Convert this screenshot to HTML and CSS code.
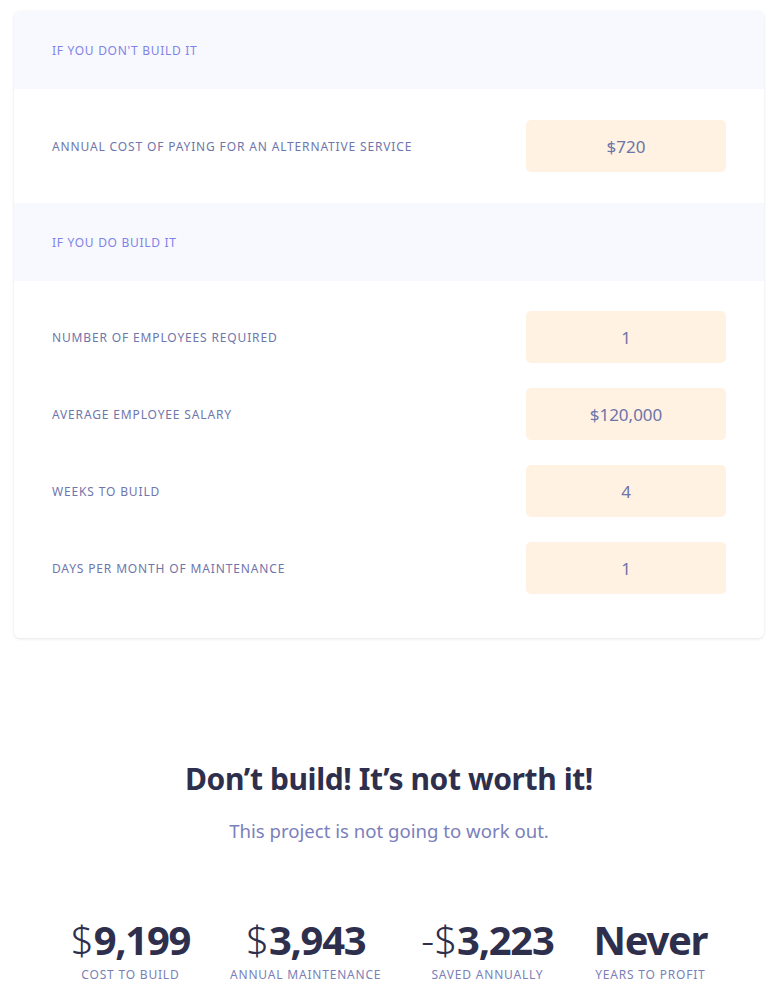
FILE: index.html
```html
<!DOCTYPE html>
<html>
<head>
<meta charset="utf-8">
<link rel="stylesheet" href="styles.css">
</head>
<body>
<div class="card">
  <div class="section-head">If you don't build it</div>
  <div class="section-body first">
    <div class="row">
      <div class="label">Annual cost of paying for an alternative service</div>
      <div class="input">$720</div>
    </div>
  </div>
  <div class="section-head">If you do build it</div>
  <div class="section-body last">
    <div class="row">
      <div class="label">Number of employees required</div>
      <div class="input">1</div>
    </div>
    <div class="row">
      <div class="label">Average employee salary</div>
      <div class="input">$120,000</div>
    </div>
    <div class="row">
      <div class="label">Weeks to build</div>
      <div class="input">4</div>
    </div>
    <div class="row">
      <div class="label">Days per month of maintenance</div>
      <div class="input">1</div>
    </div>
  </div>
</div>

<div class="result">
  <h1 class="title">Don’t build! It’s not worth it!</h1>
  <p class="subtitle">This project is not going to work out.</p>
  <div class="stats">
    <div class="stat">
      <div class="num"><span class="cur">$</span>9,199</div>
      <div class="stat-label">Cost to build</div>
    </div>
    <div class="stat">
      <div class="num"><span class="cur">$</span>3,943</div>
      <div class="stat-label">Annual maintenance</div>
    </div>
    <div class="stat">
      <div class="num"><span class="cur">-$</span>3,223</div>
      <div class="stat-label">Saved annually</div>
    </div>
    <div class="stat">
      <div class="num">Never</div>
      <div class="stat-label">Years to profit</div>
    </div>
  </div>
</div>
</body>
</html>
```
FILE: styles.css
```css
* { box-sizing: border-box; }
body {
  margin: 0;
  padding: 11px 14px 0;
  background: #ffffff;
  font-family: "Noto Sans", "Open Sans", sans-serif;
}
.card {
  background: #fff;
  border-radius: 6px;
  box-shadow: 0 1px 3px rgba(40, 45, 80, 0.12);
  overflow: hidden;
}
.section-head {
  background: #f8f9fe;
  height: 78px;
  display: flex;
  align-items: center;
  padding: 1px 38px 0;
  font-size: 12px;
  text-transform: uppercase;
  letter-spacing: 0.7px;
  color: #7f83e8;
}
.section-body {
  display: flex;
  flex-direction: column;
  gap: 25px;
  padding: 31px 38px 31px;
}
.section-body.last {
  padding: 30px 38px 44px;
}
.row {
  display: flex;
  align-items: center;
  justify-content: space-between;
}
.label {
  font-size: 12px;
  text-transform: uppercase;
  letter-spacing: 0.85px;
  color: #6e76ac;
}
.input {
  width: 200px;
  height: 52px;
  background: #fff2e3;
  border-radius: 5px;
  display: flex;
  align-items: center;
  justify-content: center;
  font-size: 17px;
  color: #6c74a8;
}
.result {
  text-align: center;
  padding-top: 121px;
}
.title {
  margin: 0;
  font-size: 30px;
  font-weight: 700;
  color: #2e2f4d;
  line-height: 40px;
  letter-spacing: -0.4px;
}
.subtitle {
  margin: 19px 0 0;
  font-size: 18.6px;
  color: #7a80bb;
  line-height: 26px;
}
.stats {
  display: flex;
  justify-content: center;
  gap: 40px;
  margin-top: 69px;
}
.stat {
  display: flex;
  flex-direction: column;
  align-items: center;
}
.num {
  font-size: 40px;
  font-weight: 700;
  color: #2e2f4d;
  line-height: 54px;
  letter-spacing: -1.3px;
}
.cur {
  font-weight: 300;
  letter-spacing: 0;
}
.stat-label {
  font-size: 12px;
  text-transform: uppercase;
  letter-spacing: 0.8px;
  color: #7a80b8;
  line-height: 16px;
}
```
